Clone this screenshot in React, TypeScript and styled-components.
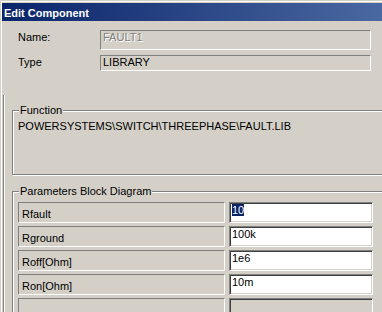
import { Fragment } from "react";
import styled, { createGlobalStyle } from "styled-components";

const GlobalStyle = createGlobalStyle`
  html, body {
    margin: 0;
    padding: 0;
    background: #d4d0c8;
  }
  * {
    box-sizing: border-box;
  }
`;

const Window = styled.div({
  width: 382,
  height: 312,
  overflow: "hidden",
  background: "#d4d0c8",
  padding: "1px 0 0 1px",
  fontFamily: '"Liberation Sans", Arial, sans-serif',
  fontSize: 11,
  color: "#000",
});

const Inner = styled.div({
  height: "100%",
  borderTop: "1px solid #fff",
  borderLeft: "1px solid #fff",
  display: "flex",
  flexDirection: "column",
});

const TitleBar = styled.div({
  marginTop: 1,
  height: 18,
  padding: "2px 0 0 2px",
  lineHeight: "16px",
  fontWeight: 700,
  color: "#fff",
  whiteSpace: "nowrap",
  background: "linear-gradient(to right, #0a246a, #a6caf0)",
  backgroundSize: "930px 100%",
  backgroundRepeat: "no-repeat",
});

const Fields = styled.div({
  paddingLeft: 16,
  display: "flex",
  flexDirection: "column",
});

const FieldRow = styled.div<{ $top: number; $height: number }>(({ $top, $height }) => ({
  display: "flex",
  alignItems: "flex-start",
  marginTop: $top,
  height: $height,
}));

const FieldLabel = styled.div({
  width: 82,
  paddingTop: 1,
  lineHeight: "13px",
});

const FieldBox = styled.div<{ $disabled?: boolean }>(({ $disabled }) => ({
  width: 271,
  height: "100%",
  borderStyle: "solid",
  borderWidth: 1,
  borderColor: "#808080 #fff #fff #808080",
  padding: "0 0 0 2px",
  lineHeight: "13px",
  color: $disabled ? "#808080" : "#000",
  textShadow: $disabled ? "1px 1px 0 #fff" : "none",
}));

const LowerPanel = styled.div({
  flex: 1,
  marginTop: 24,
  marginLeft: 1,
  borderLeft: "1px solid #808080",
  boxShadow: "inset 1px 0 0 #fff",
  display: "flex",
  flexDirection: "column",
});

const Group = styled.div<{ $top: number; $height?: number }>(({ $top, $height }) => ({
  position: "relative",
  marginTop: $top,
  marginLeft: 8,
  width: 400,
  height: $height ?? "auto",
  flex: $height ? "none" : 1,
  border: "1px solid #808080",
  boxShadow: "inset 1px 1px 0 #fff, 1px 1px 0 #fff",
}));

const Legend = styled.div({
  position: "absolute",
  top: -7,
  left: 6,
  padding: "0 1px",
  lineHeight: "13px",
  background: "#d4d0c8",
  whiteSpace: "nowrap",
});

const FunctionText = styled.div({
  padding: "9px 0 0 5px",
  lineHeight: "13px",
  whiteSpace: "nowrap",
});

const ParamGrid = styled.div({
  display: "grid",
  gridTemplateColumns: "207px 144px",
  gridAutoRows: 21,
  columnGap: 4,
  rowGap: 3,
  padding: "10px 0 0 5px",
});

const NameCell = styled.div({
  borderStyle: "solid",
  borderWidth: 1,
  borderColor: "#808080 #fff #fff #808080",
  padding: "5px 0 0 3px",
  lineHeight: "13px",
  whiteSpace: "nowrap",
});

const ValueCell = styled.div<{ $disabled?: boolean }>(({ $disabled }) => ({
  borderStyle: "solid",
  borderWidth: 1,
  borderColor: "#808080 #fff #fff #808080",
  boxShadow: "inset 1px 1px 0 #404040, inset -1px -1px 0 #d4d0c8",
  background: $disabled ? "#d4d0c8" : "#fff",
  padding: "1px 0 0 2px",
  lineHeight: "13px",
  whiteSpace: "nowrap",
}));

const Selected = styled.span({
  background: "#0a246a",
  color: "#fff",
});

const params = [
  { name: "Rfault", value: "10", selected: true },
  { name: "Rground", value: "100k" },
  { name: "Roff[Ohm]", value: "1e6" },
  { name: "Ron[Ohm]", value: "10m" },
  { name: "", value: "", disabled: true },
];

export default function App() {
  return (
    <>
      <GlobalStyle />
      <Window>
        <Inner>
          <TitleBar>Edit Component</TitleBar>
          <Fields>
            <FieldRow $top={9} $height={20}>
              <FieldLabel>Name:</FieldLabel>
              <FieldBox $disabled>FAULT1</FieldBox>
            </FieldRow>
            <FieldRow $top={5} $height={16}>
              <FieldLabel>Type</FieldLabel>
              <FieldBox>LIBRARY</FieldBox>
            </FieldRow>
          </Fields>
          <LowerPanel>
            <Group $top={15} $height={65}>
              <Legend>Function</Legend>
              <FunctionText>POWERSYSTEMS\SWITCH\THREEPHASE\FAULT.LIB</FunctionText>
            </Group>
            <Group $top={16}>
              <Legend>Parameters Block Diagram</Legend>
              <ParamGrid>
                {params.map((p, i) => (
                  <Fragment key={i}>
                    <NameCell>{p.name}</NameCell>
                    <ValueCell $disabled={p.disabled}>
                      {p.selected ? <Selected>{p.value}</Selected> : p.value}
                    </ValueCell>
                  </Fragment>
                ))}
              </ParamGrid>
            </Group>
          </LowerPanel>
        </Inner>
      </Window>
    </>
  );
}
